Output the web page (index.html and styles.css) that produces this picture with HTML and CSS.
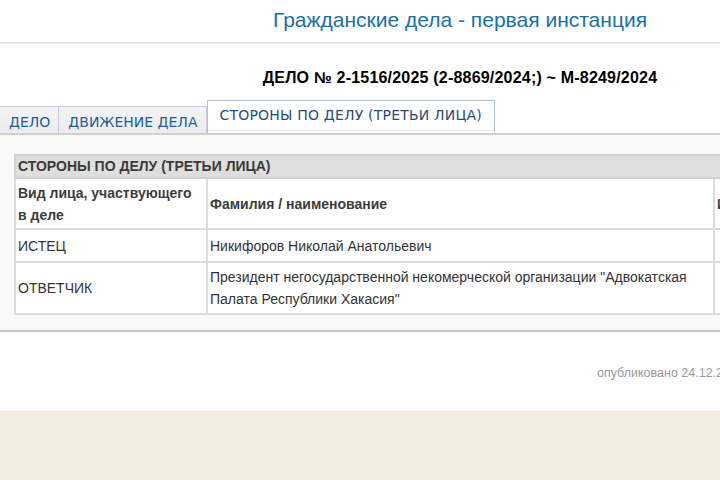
FILE: index.html
```html
<!DOCTYPE html>
<html lang="ru">
<head>
<meta charset="utf-8">
<link rel="stylesheet" href="styles.css">
</head>
<body>
<div class="page">
  <header class="top">
    <h1 class="title">Гражданские дела - первая инстанция</h1>
  </header>
  <h2 class="case">ДЕЛО № 2-1516/2025 (2-8869/2024;) ~ М-8249/2024</h2>
  <nav class="tabs">
    <span class="tab">ДЕЛО</span>
    <span class="tab">ДВИЖЕНИЕ ДЕЛА</span>
    <span class="tab active">СТОРОНЫ ПО ДЕЛУ (ТРЕТЬИ ЛИЦА)</span>
  </nav>
  <section class="panel">
    <table class="parties">
      <tr class="caption-row"><td colspan="3">СТОРОНЫ ПО ДЕЛУ (ТРЕТЬИ ЛИЦА)</td></tr>
      <tr class="head-row">
        <th class="c1">Вид лица, участвующего<br>в деле</th>
        <th class="c2">Фамилия / наименование</th>
        <th class="c3">ИНН</th>
      </tr>
      <tr class="row-a">
        <td>ИСТЕЦ</td>
        <td>Никифоров Николай Анатольевич</td>
        <td></td>
      </tr>
      <tr class="row-b">
        <td>ОТВЕТЧИК</td>
        <td>Президент негосударственной некомерческой организации "Адвокатская Палата Республики Хакасия"</td>
        <td></td>
      </tr>
    </table>
  </section>
  <div class="published">опубликовано 24.12.2024 10:31</div>
  <footer class="foot"></footer>
</div>
</body>
</html>
```

FILE: styles.css
```css
html, body {
  margin: 0;
  padding: 0;
  background: #fff;
  overflow: hidden;
  width: 720px;
  height: 480px;
}
.page {
  width: 920px;
  font-family: "Liberation Sans", Arial, sans-serif;
}
.top {
  height: 42px;
  border-bottom: 2px solid #e2e2e2;
  display: flex;
  justify-content: center;
  align-items: center;
}
.title {
  margin: 0;
  font-weight: normal;
  font-size: 21px;
  color: #1a70a8;
  position: relative;
  top: -1px;
}
.case {
  margin: 0;
  height: 56px;
  display: flex;
  align-items: center;
  justify-content: center;
  font-size: 16px;
  font-weight: bold;
  letter-spacing: 0.2px;
  color: #000;
  padding-top: 11px;
  box-sizing: border-box;
}
.tabs {
  display: flex;
  align-items: flex-end;
  height: 33px;
}
.tab {
  font-family: "DejaVu Sans", Verdana, sans-serif;
  font-size: 14px;
  color: #1c5f96;
  height: 27px;
  box-sizing: border-box;
  padding: 3px 9px 0 9px;
  display: flex;
  align-items: center;
  background: linear-gradient(#f4f4f6, #ececee);
  border-top: 1px solid #c9c9db;
  border-right: 1px solid #c9c9db;
}
.tab:first-child { padding-right: 8px; }
.tab.active {
  height: 33px;
  background: #fff;
  color: #1f4f7c;
  border: 1px solid #a9c6de;
  border-bottom: none;
  padding: 0 12px 5px 11px;
  letter-spacing: 0.2px;
  box-shadow: inset 0 -2px 0 #fff, inset 0 -3px 0 #dfe8f0;
}
.panel {
  background: #f9f9f9;
  border-top: 2px solid #cfcfcf;
  border-bottom: 2px solid #c4c4c4;
  padding: 19px 0 15px 14px;
}
.parties {
  border-collapse: collapse;
  background: #fff;
  font-size: 14px;
  color: #333;
  width: 906px;
  border: 2px solid #dcdcdc;
}
.parties td, .parties th {
  border: 2px solid #dcdcdc;
  padding: 0 2px;
  line-height: 22px;
  text-align: left;
  vertical-align: middle;
}
.caption-row td {
  background: #dedede;
  font-weight: bold;
  color: #3a3a3a;
  height: 21px;
  line-height: 21px;
  border-color: #d2d2d2;
}
.head-row th {
  font-weight: bold;
  color: #3c3c3c;
  height: 49px;
}
.c1 { width: 186px; }
.c2 { width: 501px; }
.row-a td { height: 31px; }
.row-b td { height: 50px; }
.published {
  height: 79px;
  display: flex;
  align-items: center;
  padding-left: 597px;
  font-size: 12.5px;
  color: #999;
  padding-top: 2px;
  box-sizing: border-box;
}
.foot {
  height: 80px;
  background: #f4ebe3;
  border-top: 1px solid #ebe3dc;
}
```
